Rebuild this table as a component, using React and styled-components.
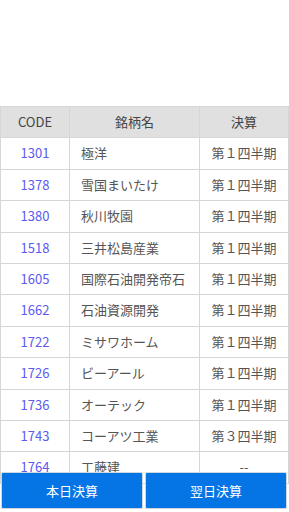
import React from "react";
import styled, { createGlobalStyle } from "styled-components";

const rows = [
  { code: "1301", name: "極洋", term: "第１四半期" },
  { code: "1378", name: "雪国まいたけ", term: "第１四半期" },
  { code: "1380", name: "秋川牧園", term: "第１四半期" },
  { code: "1518", name: "三井松島産業", term: "第１四半期" },
  { code: "1605", name: "国際石油開発帝石", term: "第１四半期" },
  { code: "1662", name: "石油資源開発", term: "第１四半期" },
  { code: "1722", name: "ミサワホーム", term: "第１四半期" },
  { code: "1726", name: "ビーアール", term: "第１四半期" },
  { code: "1736", name: "オーテック", term: "第１四半期" },
  { code: "1743", name: "コーアツ工業", term: "第３四半期" },
  { code: "1764", name: "工藤建", term: "--" },
];

function App() {
  return (
    <Page>
      <GlobalStyle />
      <TopSpace />
      <Table>
        <colgroup>
          <col style={{ width: 69 }} />
          <col style={{ width: 130 }} />
          <col style={{ width: 89 }} />
        </colgroup>
        <thead>
          <tr>
            <Th>CODE</Th>
            <Th>銘柄名</Th>
            <Th>決算</Th>
          </tr>
        </thead>
        <tbody>
          {rows.map((r) => (
            <tr key={r.code}>
              <CodeCell>{r.code}</CodeCell>
              <NameCell>{r.name}</NameCell>
              <TermCell>{r.term}</TermCell>
            </tr>
          ))}
        </tbody>
      </Table>
      <ButtonBar>
        <DayButton>本日決算</DayButton>
        <DayButton>翌日決算</DayButton>
      </ButtonBar>
    </Page>
  );
}

const GlobalStyle = createGlobalStyle`
  html, body {
    margin: 0;
    padding: 0;
    overflow: hidden;
    background: #fff;
    font-family: "Noto Sans CJK JP", "Noto Sans", sans-serif;
  }
`

const Page = styled.div`
  position: relative;
  width: 289px;
  height: 512px;
  overflow: hidden;
`

const TopSpace = styled.div`
  height: 106px;
`

const Table = styled.table`
  width: 288px;
  border-collapse: collapse;
  table-layout: fixed;
  font-size: 13px;
  td, th {
    border: 1px solid #d6d6d6;
    padding: 6px 0;
    line-height: 18.4px;
    white-space: nowrap;
    overflow: hidden;
  }
`

const Th = styled.th`
  background: #e0e0e0;
  color: #444;
  font-weight: normal;
  text-align: center;
`

const CodeCell = styled.td`
  color: #5b5bef;
  text-align: center;
`

const NameCell = styled.td`
  color: #555;
  text-align: left;
  && {
    padding-left: 11px;
  }
`

const TermCell = styled.td`
  color: #555;
  text-align: center;
`

const ButtonBar = styled.div`
  position: absolute;
  left: 1px;
  right: 2px;
  bottom: 3px;
  display: flex;
  gap: 2px;
`

const DayButton = styled.button`
  flex: 1;
  height: 37px;
  border: 1px solid #cfd6de;
  border-radius: 2px;
  background: #0575e6;
  color: #fff;
  font-family: "Noto Sans CJK JP", sans-serif;
  font-size: 13px;
  padding: 0;
`

export default App;
